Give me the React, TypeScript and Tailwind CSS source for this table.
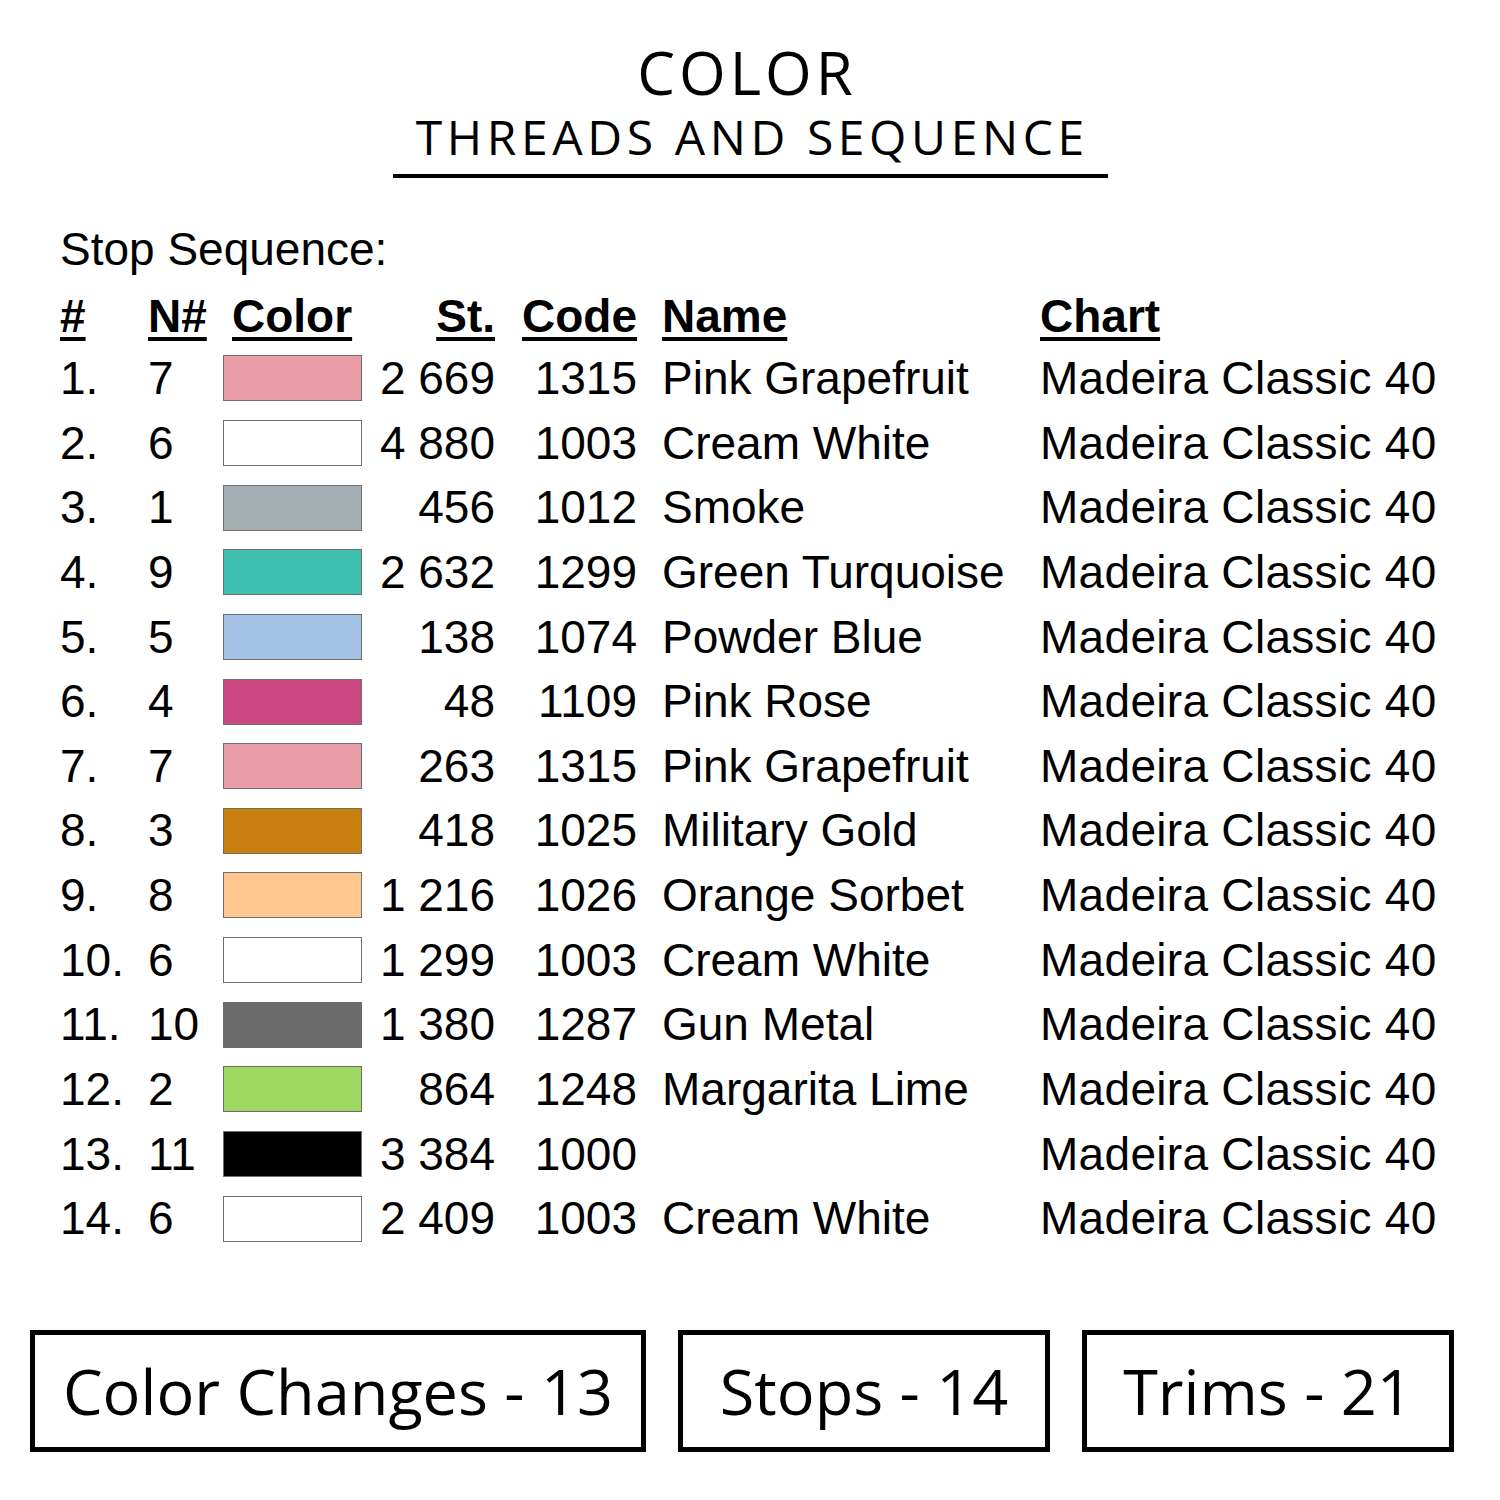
const rows = [
  { n: "1.", nn: "7", color: "#e89ca6", st: "2 669", code: "1315", name: "Pink Grapefruit" },
  { n: "2.", nn: "6", color: "#ffffff", st: "4 880", code: "1003", name: "Cream White" },
  { n: "3.", nn: "1", color: "#a5afb3", st: "456", code: "1012", name: "Smoke" },
  { n: "4.", nn: "9", color: "#3fbfb0", st: "2 632", code: "1299", name: "Green Turquoise" },
  { n: "5.", nn: "5", color: "#a4c2e3", st: "138", code: "1074", name: "Powder Blue" },
  { n: "6.", nn: "4", color: "#cb4880", st: "48", code: "1109", name: "Pink Rose" },
  { n: "7.", nn: "7", color: "#e89ca6", st: "263", code: "1315", name: "Pink Grapefruit" },
  { n: "8.", nn: "3", color: "#c8800e", st: "418", code: "1025", name: "Military Gold" },
  { n: "9.", nn: "8", color: "#ffc890", st: "1 216", code: "1026", name: "Orange Sorbet" },
  { n: "10.", nn: "6", color: "#ffffff", st: "1 299", code: "1003", name: "Cream White" },
  { n: "11.", nn: "10", color: "#6b6b6b", st: "1 380", code: "1287", name: "Gun Metal" },
  { n: "12.", nn: "2", color: "#9fd860", st: "864", code: "1248", name: "Margarita Lime" },
  { n: "13.", nn: "11", color: "#000000", st: "3 384", code: "1000", name: "" },
  { n: "14.", nn: "6", color: "#ffffff", st: "2 409", code: "1003", name: "Cream White" },
];

const head = "underline decoration-[4px] underline-offset-[5px] [text-decoration-skip-ink:none]";

function StatBox({ label, w }: { label: string; w: string }) {
  return (
    <div className={`${w} h-[122px] border-[5px] border-black flex items-center justify-center`}>
      <span className="text-[63px] leading-none text-black">{label}</span>
    </div>
  );
}

export default function App() {
  return (
    <div className="w-[1500px] h-[1500px] bg-white text-black flex flex-col">
      <div className="flex flex-col items-center font-['Open_Sans',sans-serif]">
        <div className="mt-[36px] h-[72px] flex items-center">
          <h1 className="mr-[10px] text-[60px] leading-[72px] font-medium tracking-[4px] pl-[4px]">COLOR</h1>
        </div>
        <h2 className="mt-[2px] h-[54px] text-[48px] leading-[54px] font-normal tracking-[4.6px] pl-[4.6px]">
          THREADS AND SEQUENCE
        </h2>
        <div className="mt-[10px] w-[715px] h-[4px] bg-black" />
      </div>

      <div className="mt-[42px] pl-[60px] font-['Liberation_Sans',Arial,sans-serif] text-[46px]">
        <div className="h-[58px] leading-[58px]">Stop Sequence:</div>

        <div className="mt-[8px] h-[60px] leading-[60px] flex font-bold">
          <div className="w-[88px]"><span className={head}>#</span></div>
          <div className="w-[75px]"><span className={head}>N#</span></div>
          <div className="w-[139px] pl-[9px]"><span className={head}>Color</span></div>
          <div className="w-[133px] text-right"><span className={head}>St.</span></div>
          <div className="w-[142px] text-right"><span className={head}>Code</span></div>
          <div className="w-[403px] pl-[25px]"><span className={head}>Name</span></div>
          <div><span className={head}>Chart</span></div>
        </div>

        {rows.map((r, i) => (
          <div key={i} className="h-[64.65px] leading-[64.65px] flex items-center">
            <div className="w-[88px]">{r.n}</div>
            <div className="w-[75px]">{r.nn}</div>
            <div className="w-[139px] h-[46px] border border-[#6e6e6e]" style={{ backgroundColor: r.color }} />
            <div className="w-[133px] text-right">{r.st}</div>
            <div className="w-[142px] text-right">{r.code}</div>
            <div className="w-[403px] pl-[25px] whitespace-nowrap">{r.name}</div>
            <div className="whitespace-nowrap tracking-[0.3px]">Madeira Classic 40</div>
          </div>
        ))}
      </div>

      <div className="mt-[79px] px-[30px] flex gap-[32px] font-['Open_Sans',sans-serif]">
        <StatBox label="Color Changes - 13" w="w-[616px]" />
        <StatBox label="Stops - 14" w="w-[372px]" />
        <StatBox label="Trims - 21" w="w-[372px]" />
      </div>
    </div>
  );
}
